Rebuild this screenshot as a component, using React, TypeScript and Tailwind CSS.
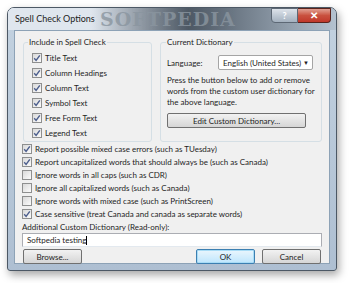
import React from 'react';

const Check: React.FC<{ on?: boolean }> = ({ on }) => (
  <span className="w-[10px] h-[10px] border border-[#8e8f8f] bg-gradient-to-br from-[#d9d9d9] to-[#fbfbfb] flex items-center justify-center shrink-0">
    {on && (
      <svg width="8" height="8" viewBox="0 0 8 8">
        <path d="M1.2 4.3 L3.1 6.4 L6.8 1.3" stroke="#4b5d8c" strokeWidth="1.4" fill="none" />
      </svg>
    )}
  </span>
);

const Row: React.FC<{ on?: boolean; label: string }> = ({ on, label }) => (
  <div className="flex items-center gap-[3px] h-[13px]">
    <Check on={on} />
    <span className="whitespace-nowrap">{label}</span>
  </div>
);

const Btn: React.FC<{ label: string; w: string; def?: boolean }> = ({ label, w, def }) => (
  <div
    className={`${w} h-[15px] rounded-[2px] flex items-center justify-center border ${
      def
        ? 'border-[#3c7fb1] bg-gradient-to-b from-[#eaf6fd] to-[#bee6fd] shadow-[inset_0_0_0_1px_#a8dcf6]'
        : 'border-[#707070] bg-gradient-to-b from-[#f2f2f2] to-[#d6d6d6]'
    }`}
  >
    {label}
  </div>
);

export default function App() {
  return (
    <div className="w-[350px] h-[283px] bg-white overflow-hidden font-['Lato',sans-serif] text-[8px] text-[#1e1e1e] pt-[7px] pl-[7px]">
      <div className="relative w-[330px] h-[264px] rounded-t-[7px] rounded-b-[3px] border border-[#4c5865] bg-gradient-to-b from-[#c3d2e0] to-[#aebfd2] shadow-[2px_4px_8px_rgba(0,0,0,0.35)] flex flex-col">
        {/* title bar */}
        <div className="relative h-[22px] shrink-0 overflow-hidden rounded-t-[6px] bg-gradient-to-r from-[#dfe6ee] from-[25%] via-[#4e5965] via-[55%] to-[#b4c2d0]">
          <div className="absolute left-[92px] top-0 text-[19px] leading-[22px] font-bold tracking-[1px] text-[#8a959f] font-['DejaVu_Serif',serif] opacity-80">
            SOFTPEDIA
          </div>
          <div className="absolute left-0 top-0 h-full w-[95px] bg-gradient-to-r from-[#dfe6ee] from-[70%] to-transparent" />
          <span className="relative pl-[7px] leading-[22px] text-[9px] text-[#222]">Spell Check Options</span>
          <div className="absolute top-0 right-[5px] flex">
            <div className="w-[27px] h-[15px] border border-[#5d6875] rounded-bl-[4px] bg-gradient-to-b from-[#dde3ea] to-[#a4b1bf] flex items-center justify-center text-white text-[9px] font-bold">
              ?
            </div>
            <div className="w-[33px] h-[15px] border border-l-0 border-[#5a231c] rounded-br-[4px] bg-gradient-to-b from-[#e0a093] via-[#c9513f] to-[#c0372a] flex items-center justify-center text-white text-[10px] font-bold">
              ✕
            </div>
          </div>
        </div>

        {/* client area */}
        <div className="mx-[6px] h-[234px] bg-[#f0f0f0] border border-[#8da2b6] flex flex-col">
          <div className="flex gap-[8px] pl-[8px] pt-[5px]">
            <fieldset className="w-[129px] h-[106px] border border-[#d5dfe5] rounded-[3px] pl-[8px]">
              <legend className="ml-[-4px] px-[1px]">Include in Spell Check</legend>
              <div className="flex flex-col gap-[2px] pt-[3px]">
                <Row on label="Title Text" />
                <Row on label="Column Headings" />
                <Row on label="Column Text" />
                <Row on label="Symbol Text" />
                <Row on label="Free Form Text" />
                <Row on label="Legend Text" />
              </div>
            </fieldset>
            <fieldset className="w-[162px] h-[106px] border border-[#d5dfe5] rounded-[3px] px-[6px]">
              <legend className="ml-[-1px] px-[1px]">Current Dictionary</legend>
              <div className="flex items-center mt-[7px]">
                <span className="w-[51px]">Language:</span>
                <div className="w-[95px] h-[15px] bg-white border border-[#a5a5a5] rounded-[2px] flex items-center pl-[4px] pr-[3px]">
                  <span className="flex-1">English (United States)</span>
                  <span className="text-[6px]">▼</span>
                </div>
              </div>
              <p className="mt-[5px] leading-[11px]">
                Press the button below to add or remove words from the custom user dictionary for the above language.
              </p>
              <div className="mt-[5px]">
                <Btn label="Edit Custom Dictionary..." w="w-[139px]" />
              </div>
            </fieldset>
          </div>
          <div className="pl-[7px] flex flex-col">
            <Row on label="Report possible mixed case errors (such as TUesday)" />
            <Row on label="Report uncapitalized words that should always be (such as Canada)" />
            <Row label="Ignore words in all caps (such as CDR)" />
            <Row label="Ignore all capitalized words (such as Canada)" />
            <Row label="Ignore words with mixed case (such as PrintScreen)" />
            <Row on label="Case sensitive (treat Canada and canada as separate words)" />
            <div className="h-[13px] flex items-center">Additional Custom Dictionary (Read-only):</div>
          </div>
          <div className="ml-[7px] mr-[7px] h-[14px] shrink-0 bg-white border border-[#abadb3] border-b-[#e3e9ef] flex items-center pl-[4px]">
            Softpedia testing<span className="w-px h-[9px] bg-black" />
          </div>
          <div className="flex items-center px-[8px] mt-[2px]">
            <Btn label="Browse..." w="w-[59px]" />
            <div className="flex-1" />
            <div className="flex gap-[7px]">
              <Btn label="OK" w="w-[59px]" def />
              <Btn label="Cancel" w="w-[59px]" />
            </div>
          </div>
        </div>
      </div>
    </div>
  );
}
